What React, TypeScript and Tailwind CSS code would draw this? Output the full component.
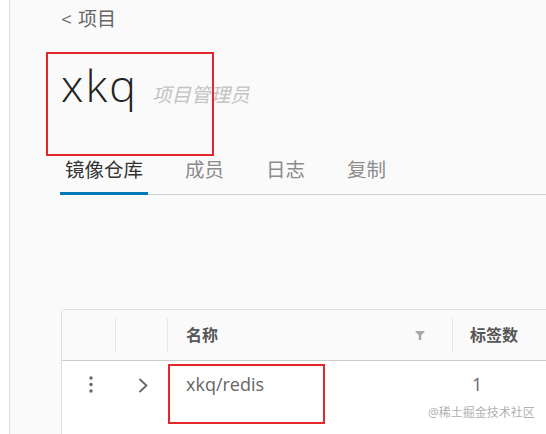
import React from 'react';

const FONT = '"Open Sans", "Noto Sans CJK SC", sans-serif';

const tabs = ['镜像仓库', '成员', '日志', '复制'];

const FilterIcon: React.FC = () => (
  <svg width="10" height="9" viewBox="0 0 10 9" className="text-[#a8a8a8]">
    <path d="M0 0h10L6.2 4.5V9H3.8V4.5z" fill="currentColor" />
  </svg>
);

const DotsIcon: React.FC = () => (
  <svg width="4" height="17" viewBox="0 0 4 17" className="text-[#666]">
    <circle cx="2" cy="2" r="1.7" fill="currentColor" />
    <circle cx="2" cy="8.5" r="1.7" fill="currentColor" />
    <circle cx="2" cy="15" r="1.7" fill="currentColor" />
  </svg>
);

const ChevronIcon: React.FC = () => (
  <svg width="10" height="15" viewBox="0 0 10 15" className="text-[#666]">
    <path d="M1.5 1l7 6.5-7 6.5" fill="none" stroke="currentColor" strokeWidth="1.8" />
  </svg>
);

const App: React.FC = () => {
  return (
    <div
      className="relative flex w-[546px] h-[434px] overflow-hidden bg-white"
      style={{ fontFamily: FONT }}
    >
      <div className="w-[10px] shrink-0 bg-white border-r border-[#ddd]" />
      <div className="relative flex-1 bg-[#fafafa] pl-[51px]">
        {/* breadcrumb */}
        <div className="pt-[7px] h-[31px] text-[19px] leading-[24px] text-[#666]">
          <span>&lt;</span>
          <span className="ml-[6px]">项目</span>
        </div>

        {/* title */}
        <div className="mt-[24px] flex items-baseline h-[60px]">
          <span className="text-[45px] leading-[60px] font-light tracking-[2px] text-[#222]">xkq</span>
          <span className="ml-[14px] text-[19.5px] italic text-[#c4c4c4]">项目管理员</span>
        </div>

        {/* tabs */}
        <div className="mt-[40px] flex h-[40px] w-[600px] shadow-[inset_0_-1px_0_#cfcfcf] -ml-[1px]">
          {tabs.map((t, i) => (
            <div
              key={t}
              className={
                'h-[40px] px-[5px] text-[19.5px] leading-[30px] ' +
                (i === 0
                  ? 'text-[#333] shadow-[inset_0_-3px_0_#0079b8]'
                  : 'text-[#8c8c8c] ml-[32px]')
              }
            >
              {t}
            </div>
          ))}
        </div>

        {/* table */}
        <div className="mt-[114px] w-[600px] border border-[#ddd] rounded-[3px] bg-white">
          <div className="flex h-[51px] items-center bg-[#fafafa] border-b border-[#ccc] text-[16px] font-semibold text-[#565656]">
            <div className="w-[54px] h-[35px] border-r border-[#e6e6e6]" />
            <div className="w-[52px] h-[35px] border-r border-[#e6e6e6]" />
            <div className="w-[285px] h-[35px] border-r border-[#e6e6e6] flex items-center justify-between pl-[18px] pr-[27px]">
              <span className="leading-[20px]">名称</span>
              <FilterIcon />
            </div>
            <div className="pl-[17px] leading-[20px]">标签数</div>
          </div>
          <div className="flex h-[80px] items-start text-[18px] text-[#666]">
            <div className="w-[53px] pt-[15px] flex justify-center pl-[4px]">
              <DotsIcon />
            </div>
            <div className="w-[52px] pt-[17px] flex justify-center pl-[3px]">
              <ChevronIcon />
            </div>
            <div className="w-[286px] pl-[19px] pt-[11px] leading-[24px]">xkq/redis</div>
            <div className="pl-[19px] pt-[11px] leading-[24px]">1</div>
          </div>
        </div>
      </div>

      {/* annotation boxes */}
      <div className="absolute left-[46px] top-[52px] w-[168px] h-[104px] border-2 border-[#e0282e]" />
      <div className="absolute left-[168px] top-[364px] w-[157px] h-[60px] border-2 border-[#e0282e]" />

      {/* watermark */}
      <div className="absolute left-[428px] top-[405px] text-[12px] leading-[16px] text-[#b0b0b0]">
        @稀土掘金技术社区
      </div>
    </div>
  );
};

export default App;
